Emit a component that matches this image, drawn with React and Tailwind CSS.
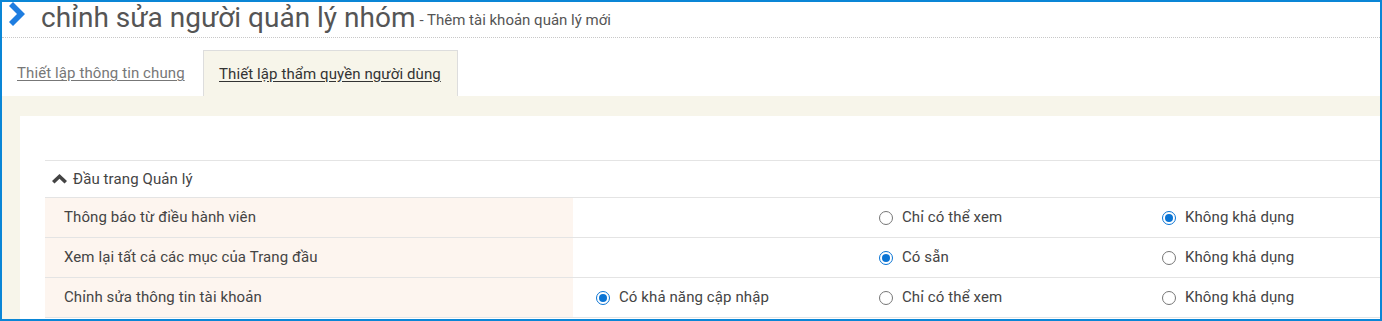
import React from 'react';

const rows = [
  { label: 'Thông báo từ điều hành viên', options: [null, { text: 'Chỉ có thể xem', on: false }, { text: 'Không khả dụng', on: true }] },
  { label: 'Xem lại tất cả các mục của Trang đầu', options: [null, { text: 'Có sẵn', on: true }, { text: 'Không khả dụng', on: false }] },
  {
    label: 'Chỉnh sửa thông tin tài khoản',
    options: [
      { text: 'Có khả năng cập nhập', on: true },
      { text: 'Chỉ có thể xem', on: false },
      { text: 'Không khả dụng', on: false },
    ],
  },
];

const Radio = ({ on }) =>
  on ? (
    <span className="flex h-[14px] w-[14px] shrink-0 items-center justify-center rounded-full border-[1.5px] border-[#0a74d4] bg-white">
      <span className="h-[8px] w-[8px] rounded-full bg-[#0a74d4]" />
    </span>
  ) : (
    <span className="h-[14px] w-[14px] shrink-0 rounded-full border border-[#767676] bg-white" />
  );

export default function App() {
  return (
    <div className="h-[321px] w-[1382px] overflow-hidden border-2 border-[#0a86d6] bg-white font-['Roboto',sans-serif]">
      <div className="flex h-[36px] items-end border-b border-dotted border-[#c8c8c8] pb-[3px]">
        <svg className="mb-[8px] ml-[6px] h-[24px] w-[17px]" viewBox="0 0 17 24">
          <path d="M1 4 L5 0 L17 12 L5 24 L1 20 L9 12 Z" fill="#1e7de0" />
        </svg>
        <h1 className="ml-[16px] text-[28px] leading-[32px] text-[#555]">chỉnh sửa người quản lý nhóm</h1>
        <span className="mb-[3px] ml-[4px] text-[15px] text-[#555]">- Thêm tài khoản quản lý mới</span>
      </div>

      <div className="mt-[12px] flex h-[46px] items-stretch">
        <a className="flex w-[201px] items-center pl-[15px] pt-[1px] text-[15px] tracking-[0.1px] text-[#777] underline underline-offset-2" href="#">
          Thiết lập thông tin chung
        </a>
        <a
          className="flex w-[255px] items-center border border-b-0 border-[#ddd] bg-[#f7f5ea] pl-[15px] pt-[1px] text-[15px] tracking-[0.1px] text-[#333] underline underline-offset-2"
          href="#"
        >
          Thiết lập thẩm quyền người dùng
        </a>
      </div>

      <div className="h-[300px] bg-[#f7f5ea] pl-[18px] pt-[20px]">
        <div className="h-full w-[1500px] bg-white pl-[25px] pt-[44px]">
          <div className="w-[1420px] text-[15px] tracking-[0.1px] text-[#444]">
            <div className="flex h-[38px] items-center gap-[6px] border-y border-[#e4e4e4] pl-[7px]">
              <svg className="h-[10px] w-[15px]" viewBox="0 0 15 10">
                <path d="M7.5 0 L15 7 L12.5 9.5 L7.5 4.8 L2.5 9.5 L0 7 Z" fill="#444" />
              </svg>
              <span>Đầu trang Quản lý</span>
            </div>
            {rows.map((row) => (
              <div key={row.label} className="grid h-[40px] grid-cols-[528px_283px_283px_283px] border-b border-[#e4e4e4]">
                <div className="flex items-center bg-[#fdf5ef] pl-[19px]">{row.label}</div>
                {row.options.map((opt, i) => (
                  <div key={i} className="flex items-center gap-[9px] pl-[23px]">
                    {opt && (
                      <>
                        <Radio on={opt.on} />
                        <span>{opt.text}</span>
                      </>
                    )}
                  </div>
                ))}
              </div>
            ))}
          </div>
        </div>
      </div>
    </div>
  );
}
